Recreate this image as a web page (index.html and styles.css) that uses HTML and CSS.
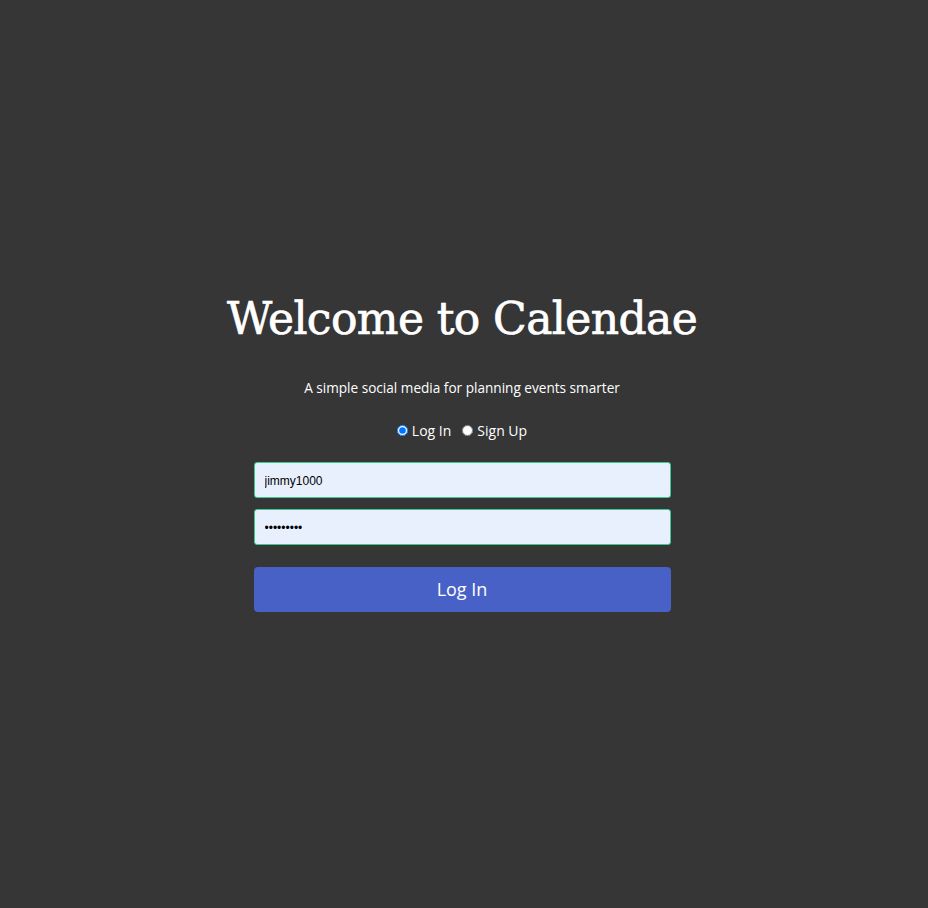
FILE: index.html
```html
<!DOCTYPE html>
<html lang="en">
<head>
<meta charset="utf-8">
<title>Calendae</title>
<link rel="stylesheet" href="styles.css">
</head>
<body>
<main class="page">
  <div class="card">
    <h1 class="title">Welcome to Calendae</h1>
    <p class="subtitle">A simple social media for planning events smarter</p>
    <div class="mode">
      <label class="mode-opt"><input type="radio" name="mode" checked> Log In</label>
      <label class="mode-opt"><input type="radio" name="mode"> Sign Up</label>
    </div>
    <form class="form">
      <input class="field" type="text" value="jimmy1000">
      <input class="field" type="password" value="password1">
      <button class="submit" type="button">Log In</button>
    </form>
  </div>
</main>
</body>
</html>
```
FILE: styles.css
```css
html, body {
  margin: 0;
  padding: 0;
  height: 100%;
}
body {
  background: #363636;
  color: #ffffff;
  font-family: "Open Sans", "Noto Sans", sans-serif;
}
.page {
  min-height: 100%;
  display: flex;
  align-items: center;
  justify-content: center;
  padding-right: 4px;
  box-sizing: border-box;
}
.card {
  width: 417px;
  display: flex;
  flex-direction: column;
  align-items: center;
}
.title {
  font-family: "DejaVu Serif", serif;
  font-weight: normal;
  font-size: 44px;
  line-height: 56px;
  margin: -6px 0 0;
  white-space: nowrap;
  letter-spacing: -0.6px;
  -webkit-text-stroke: 0.7px #ffffff;
}
.subtitle {
  font-size: 13.6px;
  margin: 32px 0 0;
  line-height: 18px;
}
.mode {
  margin-top: 25px;
  display: flex;
  gap: 11px;
  font-size: 14px;
  line-height: 18px;
}
.mode-opt {
  display: flex;
  align-items: center;
  gap: 2px;
}
.mode-opt input {
  margin: 0 2px 0 0;
  width: 11px;
  height: 11px;
}
.form {
  width: 100%;
  margin-top: 22px;
  display: flex;
  flex-direction: column;
}
.field {
  box-sizing: border-box;
  height: 36px;
  width: 100%;
  border: 1px solid #3cc98b;
  border-radius: 3px;
  background: #e8f0fe;
  padding: 2px 10px 0;
  font-family: "Liberation Sans", Arial, sans-serif;
  font-size: 12px;
  color: #000;
  margin: 0 0 11px;
  outline: none;
}
.field + .field {
  margin-bottom: 22px;
}
.submit {
  height: 45px;
  width: 100%;
  border: none;
  border-radius: 4px;
  background: #4861c7;
  color: #ffffff;
  font-family: "Open Sans", "Noto Sans", sans-serif;
  font-size: 18px;
}
```
